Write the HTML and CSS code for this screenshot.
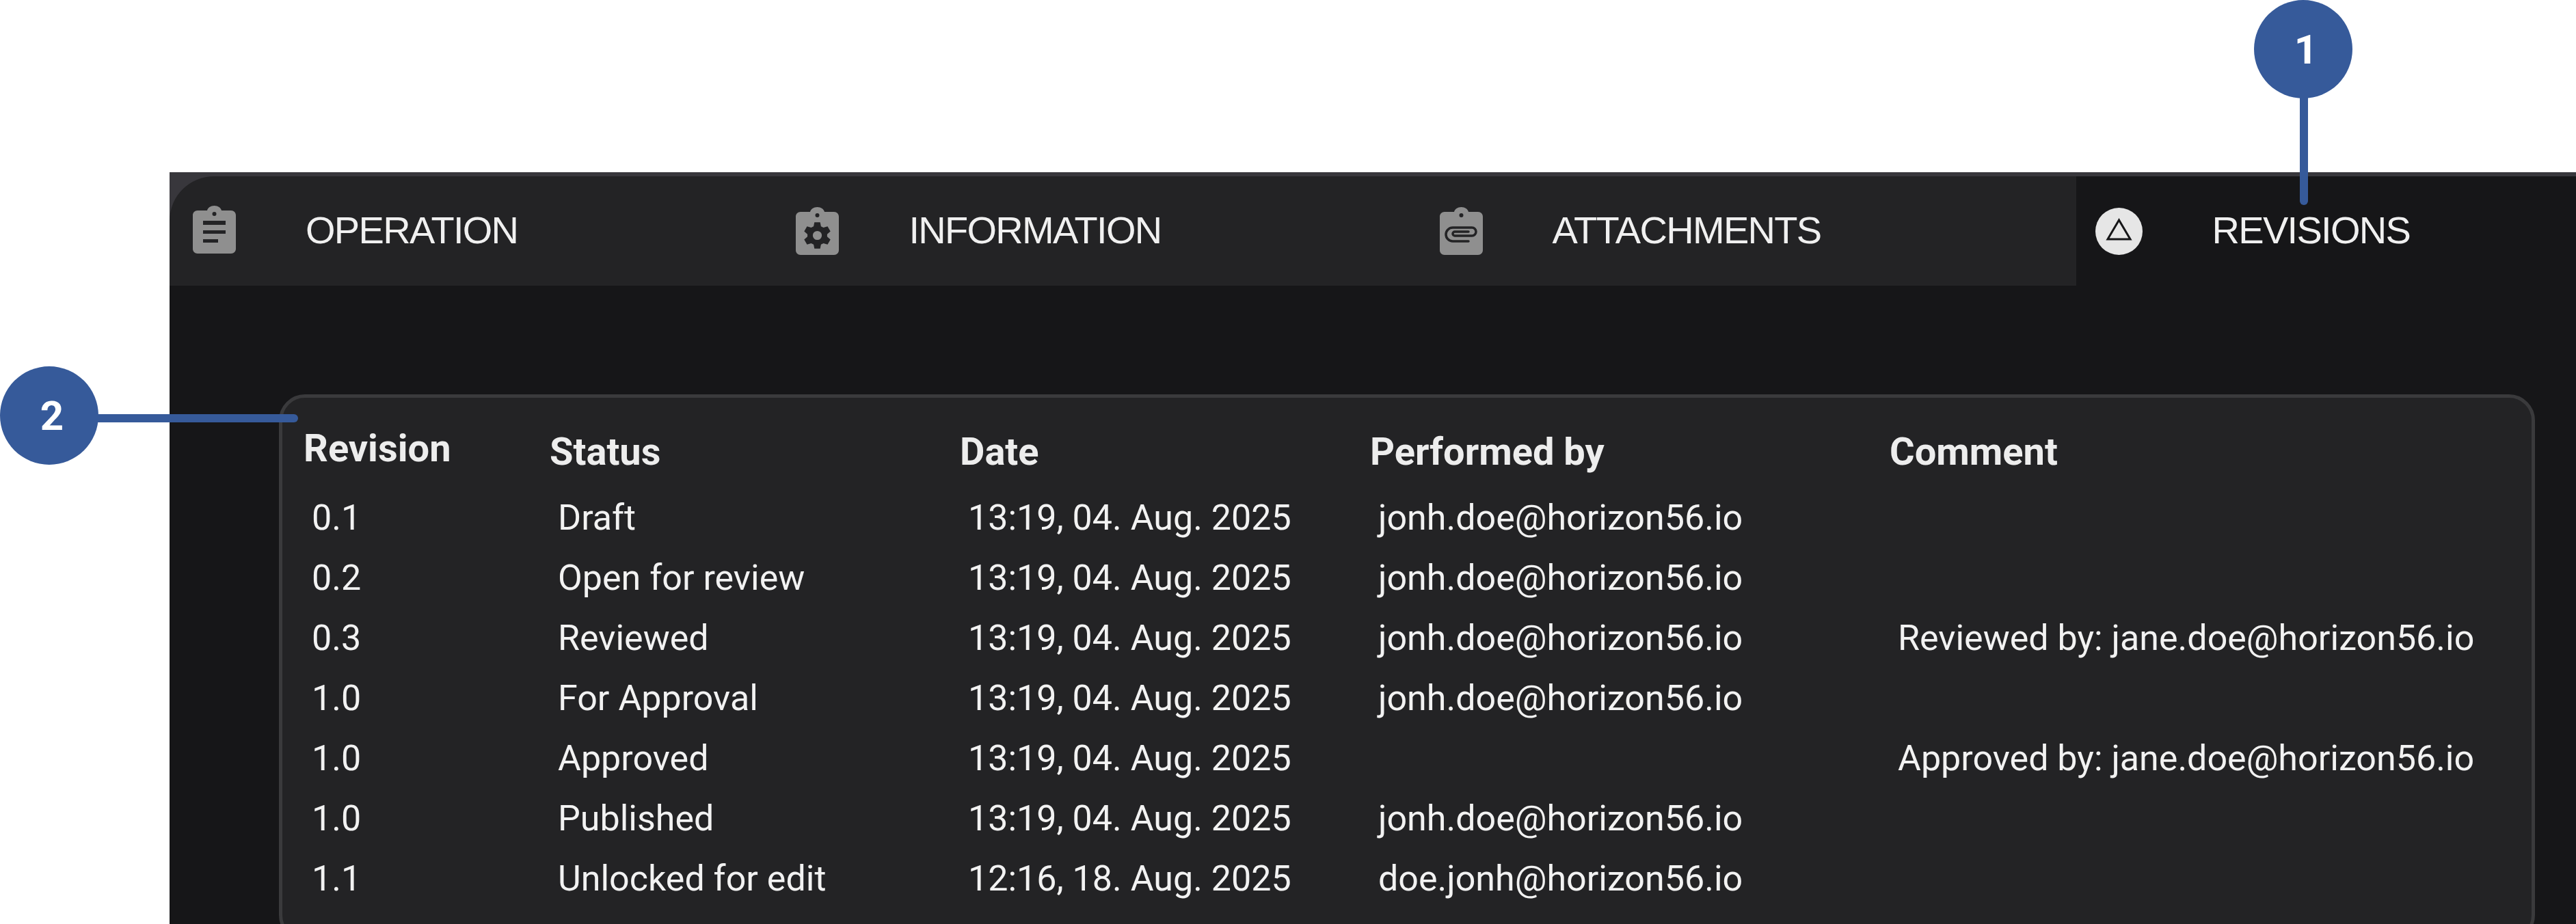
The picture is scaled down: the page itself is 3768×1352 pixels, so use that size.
FILE: index.html
```html
<!DOCTYPE html>
<html lang="en">
<head>
<meta charset="utf-8">
<title>Revisions</title>
<link rel="stylesheet" href="styles.css">
</head>
<body>
<div class="stage">
  <main class="window">
    <nav class="tabs">
      <div class="tab">
        <svg class="icon icon-raised" viewBox="0 0 63 70"><path fill="#8f8f8f" fill-rule="evenodd" d="M7 7h14C22 3 26 0 31.500 0S41 3 42 7h14c4 0 7 3 7 7v49c0 4-3 7-7 7H7c-4 0-7-3-7-7V14c0-4 3-7 7-7zM31.500 9a3 3 0 1 0 0 6 3 3 0 0 0 0-6zM15 22v6h33v-6zM15 36v5h33v-5zM15 49v5h22v-5z"/></svg>
        <span class="tab-label">OPERATION</span>
      </div>
      <div class="tab">
        <svg class="icon" viewBox="0 0 63 70"><path fill="#8f8f8f" fill-rule="evenodd" d="M7 7h14C22 3 26 0 31.500 0S41 3 42 7h14c4 0 7 3 7 7v49c0 4-3 7-7 7H7c-4 0-7-3-7-7V14c0-4 3-7 7-7zM31.500 9a3 3 0 1 0 0 6 3 3 0 0 0 0-6z"/><path transform="translate(31.500 41.500) scale(1.200) translate(-31.500 -39)" fill="#232325" fill-rule="evenodd" d="M28 23h7l1 5 3 1.500 5-1.500 3.500 6-4 3.500v3l4 3.500-3.500 6-5-1.500-3 1.500-1 5h-7l-1-5-3-1.500-5 1.500-3.500-6 4-3.500v-3l-4-3.500 3.500-6 5 1.500 3-1.500zM31.500 33.500a5.500 5.500 0 1 0 0 11 5.500 5.500 0 0 0 0-11z"/></svg>
        <span class="tab-label">INFORMATION</span>
      </div>
      <div class="tab">
        <svg class="icon" viewBox="0 0 63 70"><path fill="#8f8f8f" fill-rule="evenodd" d="M7 7h14C22 3 26 0 31.500 0S41 3 42 7h14c4 0 7 3 7 7v49c0 4-3 7-7 7H7c-4 0-7-3-7-7V14c0-4 3-7 7-7zM31.500 9a3 3 0 1 0 0 6 3 3 0 0 0 0-6z"/><path fill="none" stroke="#232325" stroke-width="3.500" stroke-linecap="round" d="M42 50H19a10 10 0 0 1 0-20H47a6 6 0 0 1 0 12H22a3 3 0 0 1 0-6H42"/></svg>
        <span class="tab-label">ATTACHMENTS</span>
      </div>
      <div class="tab tab-active">
        <svg class="icon-round" viewBox="0 0 69 69"><circle cx="34.500" cy="34.500" r="34.500" fill="#e6e6e6"/><path fill="none" stroke="#161618" stroke-width="3" d="M34.500 18 18 46h33z"/></svg>
        <span class="tab-label">REVISIONS</span>
      </div>
    </nav>
    <section class="content">
      <div class="panel">
        <table class="rev-table">
          <thead>
            <tr>
              <th class="col-rev"><span class="head-rev">Revision</span></th>
              <th class="col-status">Status</th>
              <th class="col-date">Date</th>
              <th class="col-by">Performed by</th>
              <th>Comment</th>
            </tr>
          </thead>
          <tbody>
            <tr><td>0.1</td><td>Draft</td><td>13:19, 04. Aug. 2025</td><td>jonh.doe@horizon56.io</td><td></td></tr>
            <tr><td>0.2</td><td>Open for review</td><td>13:19, 04. Aug. 2025</td><td>jonh.doe@horizon56.io</td><td></td></tr>
            <tr><td>0.3</td><td>Reviewed</td><td>13:19, 04. Aug. 2025</td><td>jonh.doe@horizon56.io</td><td>Reviewed by: jane.doe@horizon56.io</td></tr>
            <tr><td>1.0</td><td>For Approval</td><td>13:19, 04. Aug. 2025</td><td>jonh.doe@horizon56.io</td><td></td></tr>
            <tr><td>1.0</td><td>Approved</td><td>13:19, 04. Aug. 2025</td><td></td><td>Approved by: jane.doe@horizon56.io</td></tr>
            <tr><td>1.0</td><td>Published</td><td>13:19, 04. Aug. 2025</td><td>jonh.doe@horizon56.io</td><td></td></tr>
            <tr><td>1.1</td><td>Unlocked for edit</td><td>12:16, 18. Aug. 2025</td><td>doe.jonh@horizon56.io</td><td></td></tr>
          </tbody>
        </table>
      </div>
    </section>
  </main>
  <div class="callout callout-one">
    <span class="badge">1</span>
    <span class="stem-v"></span>
  </div>
  <div class="callout callout-two">
    <span class="badge">2</span>
    <span class="stem-h"></span>
  </div>
</div>
</body>
</html>
```

FILE: styles.css
```css
html, body {
  margin: 0;
  height: 100%;
  background: #ffffff;
  overflow: hidden;
}

.stage {
  position: relative;
  width: 3768px;
  height: 1352px;
  padding: 252px 0 0 248px;
  box-sizing: border-box;
  overflow: hidden;
}

.window {
  height: 1100px;
  background: #161618;
  border-top: 6px solid #38373c;
  box-sizing: border-box;
  font-family: "Roboto", sans-serif;
  color: #f2f2f2;
}

.tabs {
  display: flex;
  height: 160px;
  background: #38373c;
}

.tab {
  display: flex;
  align-items: center;
  padding: 0 373px 0 34px;
  background: #232325;
}

.tab:first-child {
  border-top-left-radius: 65px;
}

.tab-active {
  flex: 1;
  padding: 0 0 0 28px;
  background: #161618;
}

.icon {
  width: 63px;
  height: 70px;
  margin-right: 102px;
  flex: none;
}

.icon-raised {
  margin-top: -5px;
}

.icon-round {
  width: 69px;
  height: 69px;
  margin-right: 102px;
  flex: none;
}

.tab-label {
  padding-bottom: 4px;
  font-family: "Liberation Sans", Arial, sans-serif;
  font-size: 56px;
  letter-spacing: -1.700px;
  color: #f0f0f0;
  white-space: nowrap;
}

.content {
  padding: 159px 60px 0 160px;
}

.panel {
  height: 800px;
  background: #232325;
  border: 5px solid #3a3a3c;
  border-radius: 38px;
  box-sizing: border-box;
  padding: 29px 0 0 31px;
}

.rev-table {
  border-collapse: collapse;
  table-layout: fixed;
  width: 3200px;
  font-size: 52px;
}

.rev-table th {
  padding: 0 0 2px;
  height: 100px;
  text-align: left;
  font-weight: 700;
  font-size: 56px;
  color: #ededed;
}

.rev-table td {
  padding: 0 0 0 12px;
  height: 88px;
  white-space: nowrap;
}

.col-rev { width: 360px; }
.col-status { width: 600px; }
.col-date { width: 600px; }
.col-by { width: 760px; }

.head-rev {
  position: relative;
  top: -5px;
}

.callout {
  position: absolute;
}

.callout-one {
  left: 3297px;
  top: 0;
}

.callout-two {
  left: 0;
  top: 536px;
}

.badge {
  display: flex;
  align-items: center;
  justify-content: center;
  box-sizing: border-box;
  width: 144px;
  height: 144px;
  padding-left: 8px;
  border-radius: 50%;
  background: #365a9a;
  color: #ffffff;
  font-family: "Roboto", sans-serif;
  font-weight: 700;
  font-size: 60px;
}

.stem-v {
  position: absolute;
  left: 67px;
  top: 143px;
  width: 12px;
  height: 157px;
  background: #365a9a;
  border-radius: 0 0 6px 6px;
}

.stem-h {
  position: absolute;
  left: 143px;
  top: 70px;
  width: 293px;
  height: 12px;
  background: #365a9a;
  border-radius: 0 6px 6px 0;
}
```
